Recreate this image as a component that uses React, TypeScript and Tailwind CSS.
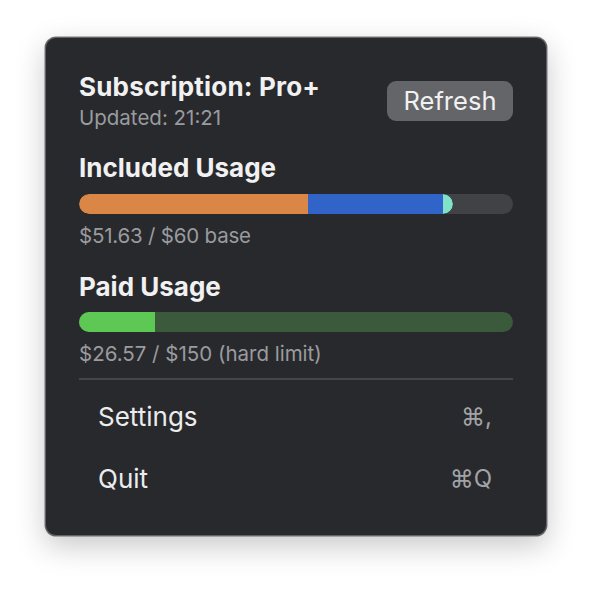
import React from "react";

export default function App() {
  return (
    <div
      className="min-h-[590px] w-[592px] bg-white pt-[37px] pl-[45px]"
      style={{ fontFamily: "Inter, 'Noto Sans', sans-serif" }}
    >
      <div className="w-[502px] h-[499px] rounded-[11px] bg-[#28292d] border border-[#626366] shadow-[0_0_0_0.5px_rgba(0,0,0,0.5),0_10px_30px_rgba(0,0,0,0.22)] px-[33px] pt-[34px] flex flex-col">
        {/* header */}
        <div className="flex items-start justify-between">
          <div className="flex flex-col">
            <div className="text-[26px] leading-[30px] font-bold text-[#f1f1f1] tracking-[0.2px]">
              Subscription: Pro+
            </div>
            <div className="mt-[5px] text-[20.5px] leading-[22px] text-[#9a9b9e]">
              Updated: 21:21
            </div>
          </div>
          <button className="mt-[9px] w-[126px] h-[40px] rounded-[9px] bg-[#646568] text-[25.5px] leading-[30px] text-[#f1f1f1] flex items-center justify-center">
            Refresh
          </button>
        </div>

        {/* Included usage */}
        <div className="mt-[25px] text-[26px] leading-[28px] font-bold text-[#f1f1f1]">
          Included Usage
        </div>
        <div className="mt-[12px] h-[20px] w-full rounded-full bg-[#404245] overflow-hidden flex">
          <div className="h-full flex rounded-full overflow-hidden w-[374px]">
            <div className="h-full w-[229px] bg-[#d98646]" />
            <div className="h-full w-[135px] bg-[#3164c8]" />
            <div className="h-full w-[10px] bg-[#80e2c9] rounded-r-full" />
          </div>
        </div>
        <div className="mt-[11px] text-[20.5px] leading-[22px] text-[#9a9b9e] tracking-[-0.2px]">
          $51.63 / $60 base
        </div>

        {/* Paid usage */}
        <div className="mt-[26px] text-[26px] leading-[28px] font-bold text-[#f1f1f1]">
          Paid Usage
        </div>
        <div className="mt-[11px] h-[20px] w-full rounded-full bg-[#3a5a3b] overflow-hidden">
          <div className="h-full w-[76px] bg-[#5dc854]" />
        </div>
        <div className="mt-[11px] text-[20.5px] leading-[22px] text-[#9a9b9e]">
          $26.57 / $150 (hard limit)
        </div>

        <div className="mt-[13px] h-[2px] w-full bg-[#45464a]" />

        {/* menu */}
        <div className="mt-[6px] flex flex-col">
          <div className="h-[62px] flex items-center justify-between pl-[19px] pr-[21px]">
            <span className="text-[26px] leading-[30px] text-[#ececec]">Settings</span>
            <span className="text-[24px] leading-[30px] text-[#a2a3a6]">⌘,</span>
          </div>
          <div className="h-[62px] flex items-center justify-between pl-[19px] pr-[21px]">
            <span className="text-[26px] leading-[30px] text-[#ececec]">Quit</span>
            <span className="text-[24px] leading-[30px] text-[#a2a3a6]">⌘Q</span>
          </div>
        </div>
      </div>
    </div>
  );
}
